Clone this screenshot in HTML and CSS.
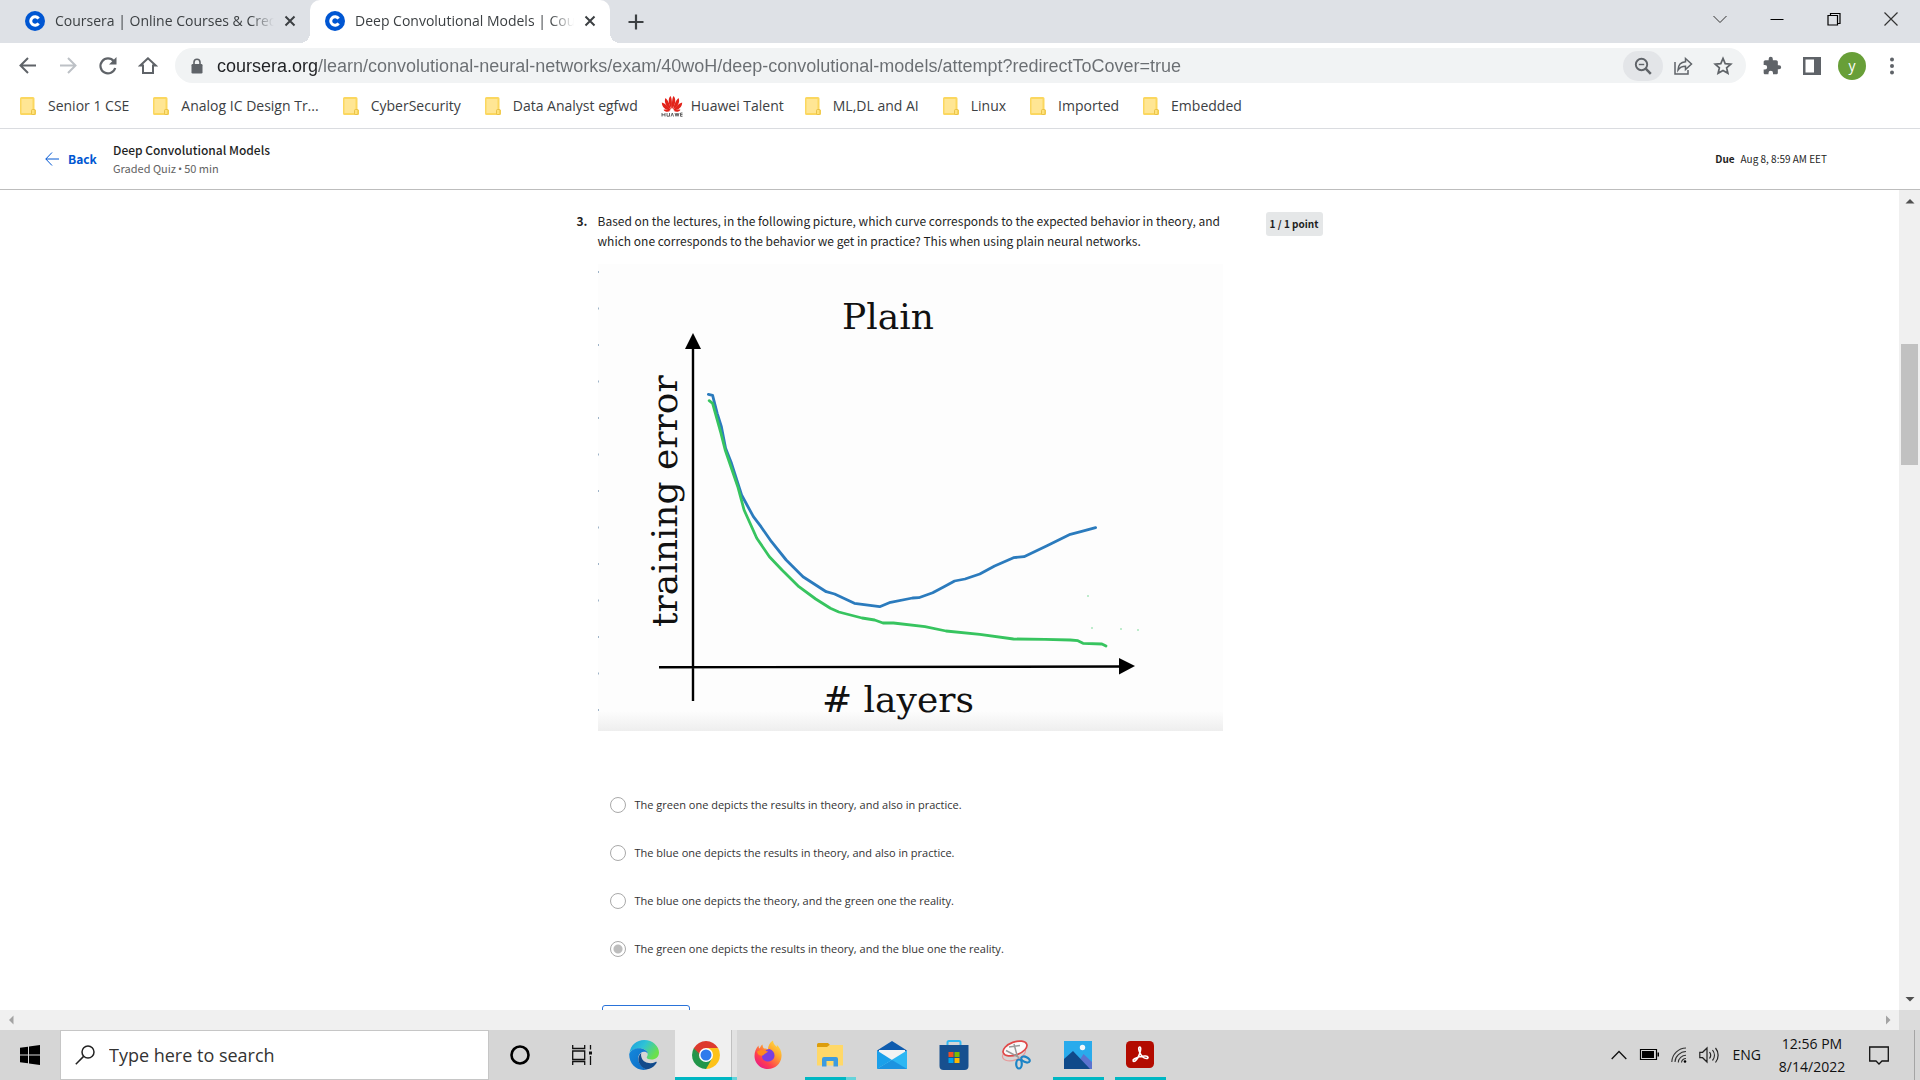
FILE: index.html
```html
<!DOCTYPE html>
<html lang="en">
<head>
<meta charset="utf-8">
<title>Deep Convolutional Models | Coursera</title>
<link rel="stylesheet" href="styles.css">
</head>
<body>
<svg class="defs" aria-hidden="true">
  <defs>
    <symbol id="coursera" viewBox="0 0 20 20"><circle cx="10" cy="10" r="10" fill="#0056d2"/><path d="M13.6 7.6A4.3 4.3 0 1 0 13.6 12.4" fill="none" stroke="#fff" stroke-width="3"/></symbol>
    <symbol id="x" viewBox="0 0 12 12"><path d="M1.500 1.500l9 9M10.500 1.500l-9 9" stroke="#3c4043" stroke-width="2"/></symbol>
    <symbol id="folder" viewBox="0 0 16 18"><path d="M1.500 0h11.500a1.500 1.500 0 0 1 1.500 1.500V12l1.500 1v4a1 1 0 0 1-1 1H1.500A1.500 1.500 0 0 1 0 16.500v-15A1.500 1.500 0 0 1 1.500 0z" fill="#fbd75f"/><path d="M1.500 2h11v14h-11z" fill="#ffe694"/><rect x="11.500" y="12.500" width="3.500" height="5" rx="1" fill="#ffe27a" stroke="#e3b93b" stroke-width=".8"/></symbol>
  </defs>
</svg>

<header class="browser">
  <div class="tabstrip">
    <div class="tab">
      <svg class="i20"><use href="#coursera"/></svg>
      <span class="tab-title">Coursera | Online Courses &amp; Cred</span>
      <button class="bare" aria-label="Close tab"><svg class="i12"><use href="#x"/></svg></button>
    </div>
    <div class="tab tab-active">
      <svg class="i20"><use href="#coursera"/></svg>
      <span class="tab-title">Deep Convolutional Models | Cou</span>
      <button class="bare" aria-label="Close tab"><svg class="i12"><use href="#x"/></svg></button>
    </div>
    <button class="bare new-tab" aria-label="New tab"><svg class="i16" viewBox="0 0 16 16"><path d="M8 .5v15M.5 8h15" stroke="#3c4043" stroke-width="2.200"/></svg></button>
    <div class="win">
      <button class="bare" aria-label="Search tabs"><svg class="i14" viewBox="0 0 14 14"><path d="M.5 4l6.500 6.500L13.500 4" fill="none" stroke="#333"/></svg></button>
      <button class="bare" aria-label="Minimize"><svg class="i14" viewBox="0 0 14 14"><path d="M.5 7.500h13" stroke="#000"/></svg></button>
      <button class="bare" aria-label="Restore"><svg class="i14" viewBox="0 0 14 14"><path d="M1 3.500h9.500V13H1zM3.500 3.500v-2H13v10h-2.500" fill="none" stroke="#000" stroke-width="1.200"/></svg></button>
      <button class="bare" aria-label="Close"><svg class="i14" viewBox="0 0 14 14"><path d="M.5.5l13 13M13.500.5l-13 13" stroke="#333" stroke-width="1.200"/></svg></button>
    </div>
  </div>

  <div class="toolbar">
    <div class="nav">
      <button class="bare" aria-label="Back"><svg class="i20" viewBox="0 0 20 20" fill="none" stroke="#5f6368" stroke-width="2"><path d="M18 9.500H3M10 2L2.500 9.500 10 17"/></svg></button>
      <button class="bare" aria-label="Forward"><svg class="i20" viewBox="0 0 20 20" fill="none" stroke="#bdc1c6" stroke-width="2"><path d="M2 9.500h15M10 2l7.500 7.500L10 17"/></svg></button>
      <button class="bare" aria-label="Reload"><svg class="i20" viewBox="0 0 20 20"><path d="M15.800 5.200A7.500 7.500 0 1 0 17.200 12" fill="none" stroke="#5f6368" stroke-width="2.200"/><path d="M18.500 1v7.500H11z" fill="#5f6368"/></svg></button>
      <button class="bare" aria-label="Home"><svg class="i20" viewBox="0 0 20 20"><path d="M10 2.300L2.300 9.500H5V17h10V9.500h2.700z" fill="none" stroke="#5f6368" stroke-width="2"/></svg></button>
    </div>
    <div class="omnibox">
      <svg class="i16" viewBox="0 0 16 16"><rect x="2.500" y="6" width="11" height="9.500" rx="1.200" fill="#5f6368"/><path d="M5 6.500V4.200a3 3 0 0 1 6 0v2.300" fill="none" stroke="#5f6368" stroke-width="1.600"/></svg>
      <input class="url" type="text" aria-label="Address" value="coursera.org/learn/convolutional-neural-networks/exam/40woH/deep-convolutional-models/attempt?redirectToCover=true">
      <button class="bare pill" aria-label="Zoom"><svg class="i18" viewBox="0 0 18 18" fill="none" stroke="#5f6368"><circle cx="7.500" cy="7.500" r="5.700" stroke-width="1.900"/><path d="M11.700 11.700l5.100 5.100" stroke-width="2.500"/><path d="M4.800 7.500h5.400" stroke-width="1.400"/></svg></button>
      <button class="bare pill-plain" aria-label="Share"><svg class="i20" viewBox="0 0 20 20" fill="none" stroke="#5f6368" stroke-width="1.500"><path d="M2 6v12h13v-4"/><path d="M12.500 2.500L18.500 8l-6 5.500V10.300C9 10.300 7 11 5 14c.2-5 3-8 7.500-8.300z"/></svg></button>
      <button class="bare pill-plain" aria-label="Bookmark"><svg class="i20" viewBox="0 0 20 20"><path d="M10 2.400l2.200 5.200 5.600.5-4.200 3.700 1.300 5.500L10 14.400l-4.900 2.900 1.300-5.500L2.200 8.100l5.600-.5z" fill="none" stroke="#5f6368" stroke-width="1.700"/></svg></button>
    </div>
    <div class="extras">
      <button class="bare" aria-label="Extensions"><svg class="i20" viewBox="0 0 24 24"><path d="M20.500 11H19V7c0-1.100-.9-2-2-2h-4V3.500a2.500 2.500 0 0 0-5 0V5H4c-1.100 0-2 .9-2 2v3.800h1.500a2.700 2.700 0 0 1 0 5.400H2V20c0 1.100.9 2 2 2h3.800v-1.500a2.700 2.700 0 0 1 5.400 0V22H17c1.100 0 2-.9 2-2v-4h1.500a2.500 2.500 0 0 0 0-5z" fill="#5f6368"/></svg></button>
      <button class="bare side-panel" aria-label="Side panel"><svg class="i20" viewBox="0 0 20 20"><path d="M1 1h18v18H1zM3.500 3.500v13H12v-13z" fill="#5f6368" fill-rule="evenodd"/></svg></button>
      <button class="bare avatar" aria-label="Profile">y</button>
      <button class="bare" aria-label="Menu"><svg class="i20" viewBox="0 0 20 20" fill="#5f6368"><circle cx="10" cy="3.500" r="2"/><circle cx="10" cy="10" r="2"/><circle cx="10" cy="16.500" r="2"/></svg></button>
    </div>
  </div>

  <nav class="bookmarks" aria-label="Bookmarks">
    <a href="#"><svg class="fold"><use href="#folder"/></svg>Senior 1 CSE</a>
    <a href="#"><svg class="fold"><use href="#folder"/></svg>Analog IC Design Tr...</a>
    <a href="#"><svg class="fold"><use href="#folder"/></svg>CyberSecurity</a>
    <a href="#"><svg class="fold"><use href="#folder"/></svg>Data Analyst egfwd</a>
    <a class="huawei" href="#"><svg class="i22" viewBox="0 0 22 22"><g fill="#e2231a"><path d="M10.700 14C7 9 7 3 9.500 1c1.500 2 1.800 8 1.200 13zM11.300 14C15 9 15 3 12.500 1c-1.500 2-1.800 8-1.200 13z"/><path d="M10 14.500C5.500 12 2.500 7 4.500 3c2.500 2 4.500 7 5.500 11.500zM12 14.500c4.500-2.500 7.500-7.500 5.500-11.500-2.500 2-4.500 7-5.500 11.500z"/><path d="M9.600 15C5 15.500 1 12.500.8 7.500 4 8.500 7.500 11.500 9.600 15zM12.400 15c4.600.5 8.600-2.500 8.800-7.500-3.200 1-6.700 4-8.800 7.500z"/><path d="M9.500 15.700c-2.500 1.800-5.500 1.500-7-.9 2-.6 5-.3 7 .9zM12.500 15.700c2.500 1.800 5.500 1.500 7-.9-2-.6-5-.3-7 .9z"/></g><path d="M1 18v3.500M4 18v3.500M1 19.800h3M6 18v3.200h2.500V18M10 21.500l1.300-3.500 1.200 3.500M14 18l1 3.300L16 18l1 3.300 1-3.300M21.500 18h-2v3.300h2M21.500 19.600h-2" fill="none" stroke="#555" stroke-width=".9"/></svg>Huawei Talent</a>
    <a href="#"><svg class="fold"><use href="#folder"/></svg>ML,DL and AI</a>
    <a href="#"><svg class="fold"><use href="#folder"/></svg>Linux</a>
    <a href="#"><svg class="fold"><use href="#folder"/></svg>Imported</a>
    <a href="#"><svg class="fold"><use href="#folder"/></svg>Embedded</a>
  </nav>
</header>

<div class="quiz-bar">
  <a class="back" href="#"><svg class="i14" viewBox="0 0 14 14" fill="none" stroke="#0056d2"><path d="M14 7H.8M7 .5L.8 7 7 13.500"/></svg>Back</a>
  <div class="quiz-name">
    <h1>Deep Convolutional Models</h1>
    <p>Graded Quiz<span class="dot">•</span>50 min</p>
  </div>
  <p class="due"><b>Due</b><span>Aug 8, 8:59 AM EET</span></p>
</div>

<div class="viewport">
  <main class="page">
    <form class="question">
      <b class="number">3.</b>
      <div class="body">
        <p>Based on the lectures, in the following picture, which curve corresponds to the expected behavior in theory, and which one corresponds to the behavior we get in practice? This when using plain neural networks.</p>
        <svg class="figure" viewBox="0 0 625 467" role="img" aria-label="Training error against number of layers for plain networks">
          <defs>
            <linearGradient id="shade" x1="0" y1="0" x2="0" y2="1"><stop offset="0" stop-color="#fdfdfd"/><stop offset="1" stop-color="#eeeeee"/></linearGradient>
          </defs>
          <rect width="625" height="467" fill="#fdfdfd"/>
          <rect y="447" width="625" height="20" fill="url(#shade)"/>
          <path d="M.5 7v446" stroke="#9fb4c8" stroke-dasharray="2 34.500"/>
          <g fill="none" stroke="#000" stroke-width="2.400"><path d="M95 84v353M61 403.300L522 402.500"/></g>
          <path d="M95 69l8 16H87zM537 402l-16 8.500v-16.500z"/>
          <g fill="none" stroke-linejoin="round" stroke-linecap="round" stroke-width="2.800">
            <polyline stroke="#2b7bbd" points="110.400,130.300 114.600,131.300 119.200,149.300 123.400,162.700 127.600,184.300 133.500,199.300 143.600,231 155.400,252.700 163,262.700 173.500,277.700 188.200,296 205,312.700 228.200,327.700 236.600,330 256.400,339.300 281.700,342.700 291.300,338.700 314.500,334 320.800,333.700 334.700,328.700 346,322.700 356.600,317 367,315 381.800,310 396.600,302 415.500,293.700 426,292.700 449,281.700 472.300,270.300 482.800,267.700 497.600,263.700"/>
            <polyline stroke="#37c45f" points="111.200,136.700 114.600,139.300 123,169.300 127.200,186 139.800,222.700 146.100,246 158.800,274.300 171.400,292.700 184,306 200.900,322.700 217.700,335 232.400,344.300 240.800,348 264,354 276.600,356 285,359 295.500,359 327,362.700 348,367 381.800,370.300 415.500,375 447,375.300 472.300,376 479.900,376.700 485,379.300 503.900,380 508,382"/>
          </g>
          <g fill="#a8e6bb"><circle cx="490" cy="332" r="1"/><circle cx="494" cy="364" r="1"/><circle cx="523" cy="365" r="1"/><circle cx="540" cy="366" r="1"/></g>
          <g class="fig-text">
            <text x="244" y="65">Plain</text>
            <text x="224" y="448"># layers</text>
            <text transform="translate(79 363) rotate(-90)">training error</text>
          </g>
        </svg>
        <fieldset class="options">
          <label><input type="radio" name="q3">The green one depicts the results in theory, and also in practice.</label>
          <label><input type="radio" name="q3">The blue one depicts the results in theory, and also in practice.</label>
          <label><input type="radio" name="q3">The blue one depicts the theory, and the green one the reality.</label>
          <label><input type="radio" name="q3" checked>The green one depicts the results in theory, and the blue one the reality.</label>
        </fieldset>
        <button class="more" type="button" aria-label="Show explanation"></button>
      </div>
      <span class="points">1 / 1 point</span>
    </form>
  </main>
  <div class="vbar">
    <svg class="i14" viewBox="0 0 14 14"><path d="M2.500 9.500h9L7 5z" fill="#505050"/></svg>
    <div class="thumb"></div>
    <svg class="i14" viewBox="0 0 14 14"><path d="M2.500 5h9L7 9.500z" fill="#505050"/></svg>
  </div>
  <div class="hbar">
    <svg class="i14" viewBox="0 0 14 14"><path d="M9.500 2.500v9L5 7z" fill="#a3a3a3"/></svg>
    <svg class="i14" viewBox="0 0 14 14"><path d="M5 2.500v9L9.500 7z" fill="#a3a3a3"/></svg>
  </div>
  <div class="corner"></div>
</div>

<footer class="taskbar">
  <button class="bare start" aria-label="Start"><svg class="i20" viewBox="0 0 20 20"><path d="M0 2.800L8 1.700v7.800H0zM9 1.500L20 0v9.500H9zM0 10.500h8v7.800L0 17.200zM9 10.500h11V20L9 18.500z"/></svg></button>
  <label class="search">
    <svg class="i20" viewBox="0 0 20 20" fill="none" stroke="#222" stroke-width="1.500"><circle cx="13" cy="7" r="6"/><path d="M8.600 11.400L.8 19.200"/></svg>
    <input type="text" placeholder="Type here to search" aria-label="Type here to search">
  </label>
  <div class="apps">
    <button class="bare" aria-label="Cortana"><svg class="i20" viewBox="0 0 20 20"><circle cx="10" cy="10" r="8.500" fill="none" stroke="#000" stroke-width="2.600"/></svg></button>
    <button class="bare" aria-label="Task view"><svg class="i20" viewBox="0 0 20 20" fill="none" stroke="#111" stroke-width="1.300"><path d="M.7 0v3.500h12V0M.7 6h12v8.500H.7zM.7 20v-3.500h12V20M18.500 0v4.500M18.500 11v9"/><path d="M17 6.500h3v3h-3z" fill="#111" stroke="none"/></svg></button>
    <button class="bare" aria-label="Edge"><svg class="i30" viewBox="0 0 30 30">
      <defs><linearGradient id="e1" x1="0" y1="0" x2="1" y2=".5"><stop offset="0" stop-color="#1a9be0"/><stop offset=".5" stop-color="#2fc3d6"/><stop offset="1" stop-color="#6be04b"/></linearGradient><linearGradient id="e2" x1="0" y1="0" x2="1" y2="1"><stop offset="0" stop-color="#1488dc"/><stop offset="1" stop-color="#0f6cc4"/></linearGradient></defs>
      <path d="M.5 13C1.500 5 8 0 15 0c9 0 15 6.500 15 12.500 0 4.500-3.500 7-7.500 7-3 0-4.800-1-4.800-2 0-.8 1-1.200 1-3.500 0-3-3-5.500-7.700-5.500C6 8.500 2 10 .5 13z" fill="url(#e1)"/>
      <path d="M.2 14C1.500 10.500 5 8.200 10 8.200c5 0 8.500 2.600 8.700 5.300-1-1.500-2.300-2-4-1.800-4 .5-6 4.300-5.300 8.300.8 4.500 4 8 9 9.300C9 32 0 25 .2 14z" fill="url(#e2)"/>
      <path d="M12.300 13c-3.300 2.500-3.800 7.500-1.300 11.500 2.500 4 6.500 5.500 9.500 4.300 3-1.200 5.500-3.300 7-5.800.6-1-.2-1.400-1-1-5 2.500-12 1-13.800-4-.8-2-.8-3.800-.4-5z" fill="#114a8b"/></svg></button>
    <button class="bare chrome" aria-label="Chrome"><svg class="i28" viewBox="0 0 28 28"><path d="M14 14L1.900 7A14 14 0 0 1 26.100 7z" fill="#dd3a2e"/><path d="M14 14L26.100 7A14 14 0 0 1 14 28z" fill="#fdc21a"/><path d="M14 14L14 28A14 14 0 0 1 1.900 7z" fill="#22964a"/><path d="M14 7h12.100L20 17.500z" fill="#fdc21a"/><path d="M20 17.500L14 28 8 17.500z" fill="#22964a"/><path d="M8 17.500L1.900 7 14 7z" fill="#22964a"/><path d="M1.900 7h24.200H14L8 17.500z" fill="#dd3a2e"/><path d="M1.900 7L8 17.500 14 20z" fill="#22964a"/><circle cx="14" cy="14" r="7" fill="#fff"/><circle cx="14" cy="14" r="5.500" fill="#2f7bec"/></svg></button>
    <button class="bare" aria-label="Firefox"><svg class="i30" viewBox="0 0 30 30">
      <defs><linearGradient id="f1" x1="1" y1="0" x2=".2" y2="1"><stop offset="0" stop-color="#fff04a"/><stop offset=".4" stop-color="#ffa52e"/><stop offset=".75" stop-color="#ff3d50"/><stop offset="1" stop-color="#e6178d"/></linearGradient></defs>
      <path d="M15 29C7 29 1.500 23 1.500 16c0-4 1.500-8 4-10.500 0 1.500.5 2.500 1 3 1-1.500 1.500-3 3-4 0 1.500.5 3 1.500 4 2 0 3 .3 4 1C15 6 16.500 2.500 20 .500c0 2.500 1.500 4.500 4 6.500 0-.8 0-1.500-.5-2.500 3.500 3 5.500 7.500 5 12C28 24 22 29 15 29z" fill="url(#f1)"/>
      <path d="M15 21.500c-4 0-6-2.500-6-5.500 0-2 1-3.500 2.500-4 1.500-2 3-3 5-3 3 1 5 3.500 5 6.500 0 3.500-3 6-6.500 6z" fill="#7a3ee0"/><path d="M4 11.500c2.500-1.500 5-2 7-1 1 .6 2.500.7 4 .8-.5 1.500-3 2-4 3.200-.6.800-1.500 1.500-3 1-2 0-3.500-1.500-4-4z" fill="#ff8a1f"/></svg></button>
    <button class="bare open more-open" aria-label="File Explorer"><svg class="i28" viewBox="0 0 28 28"><path d="M1 3.500A1.500 1.500 0 0 1 2.500 2h9.500l2 2v3H1z" fill="#dc9d0c"/><path d="M1 6h10l2.500-2H27v20.500H1z" fill="#ffd868"/><path d="M6 25.500V18a2 2 0 0 1 2-2h12a2 2 0 0 1 2 2v7.500h-4.500V20h-7v5.500z" fill="#3d9be0"/></svg></button>
    <button class="bare" aria-label="Mail"><svg class="i30" viewBox="0 0 30 30"><path d="M0 10.500L15 1l15 9.500-3 2H3z" fill="#0f5cae"/><path d="M2 10h26v13H2z" fill="#f3f3f3"/><path d="M0 10.500L15 20 0 29z" fill="#1ba0ea"/><path d="M30 10.500V29H0z" fill="#2db7f3"/><path d="M0 29h30L15 20z" fill="#1c93e0"/></svg></button>
    <button class="bare" aria-label="Store"><svg class="i30" viewBox="0 0 30 30"><path d="M8.500 7V2.500A1.500 1.500 0 0 1 10 1h10a1.500 1.500 0 0 1 1.500 1.500V7" fill="none" stroke="#32b8f2" stroke-width="2"/><path d="M.5 5h29v21a4 4 0 0 1-4 4h-21a4 4 0 0 1-4-4z" fill="#17508f"/><path d="M9.500 12h5v5h-5z" fill="#f25022"/><path d="M15.500 12h5v5h-5z" fill="#7fba00"/><path d="M9.500 18h5v5h-5z" fill="#00a4ef"/><path d="M15.500 18h5v5h-5z" fill="#ffb900"/></svg></button>
    <button class="bare" aria-label="Snipping Tool"><svg class="i30" viewBox="0 0 30 30" fill="none"><ellipse cx="13" cy="13.500" rx="12" ry="6.500" transform="rotate(-20 13 13.500)" stroke="#e79a9a" stroke-width="1.200"/><ellipse cx="14" cy="8.500" rx="12.500" ry="6.500" transform="rotate(-20 14 8.500)" fill="#fafafa" stroke="#e04848" stroke-width="1.700"/><path d="M13 4l3.500 13M5 10.500l13 7M8 7l11-1.500" stroke="#999" stroke-width="1.500"/><ellipse cx="18" cy="24" rx="2.800" ry="4.500" stroke="#1c84c6" stroke-width="2.200"/><ellipse cx="24.500" cy="19.500" rx="4.500" ry="2.600" transform="rotate(25 24.500 19.500)" stroke="#1c84c6" stroke-width="2.200"/></svg></button>
    <button class="bare open" aria-label="Photos"><svg class="i28" viewBox="0 0 28 28"><path d="M0 0h28v28H0z" fill="#29abec"/><path d="M10 28l9.500-15L28 21v7z" fill="#5b73cf"/><path d="M0 18l9-8 17 18H0z" fill="#104a8a"/><circle cx="18.500" cy="6.500" r="2.700" fill="#f3f8fb"/></svg></button>
    <button class="bare open" aria-label="Acrobat Reader"><svg class="i28" viewBox="0 0 28 28"><rect width="28" height="27" rx="4.500" fill="#b30b00"/><path d="M13.800 6c-1.600 0-1.300 3 .2 6 1.400 3 4 5.500 6.500 5.500 2.300 0 2-2.300-1-2.500-4-.2-8 1-11 2.800-2.600 1.600-1.200 3.700.8 2 2.200-1.900 4-5.500 4.900-9C14.900 8 14.900 6 13.800 6z" fill="none" stroke="#fff" stroke-width="1.600"/></svg></button>
  </div>
  <div class="tray">
    <svg class="i16" viewBox="0 0 16 16"><path d="M.7 12L8 4.500l7.300 7.500" fill="none" stroke="#111" stroke-width="1.300"/></svg>
    <svg class="i20" viewBox="0 0 20 20"><path d="M1.500 4.500h16v10h-16z" fill="none" stroke="#000" stroke-width="1.200"/><path d="M3 6h12v7H3zM18.500 7.500H20v4h-1.500z"/></svg>
    <svg class="i16" viewBox="0 0 16 16" fill="none" stroke="#333" stroke-width="1.100"><path d="M.8 15C1 7.500 7.500 1 15 1M4 15C4 9.500 9.500 4.500 15 4.500M7.300 15.500c0-4 3.700-7.300 7.700-7.300M10.500 15.500c0-2 2-4 4.500-4"/><circle cx="14" cy="14.500" r="1.300" fill="#000" stroke="none"/></svg>
    <svg class="i20" viewBox="0 0 20 20" fill="none" stroke="#222" stroke-width="1.200"><path d="M.8 7.300h2.800L8 3v14l-4.400-4.300H.8zM10.500 7c1.500 2 1.500 4.500 0 6.500M13.500 5c2.500 3.200 2.500 7.500 0 10.500M16.500 3c3.500 4.200 3.500 10 0 14.500"/></svg>
    <span class="lang">ENG</span>
    <time class="clock">12:56 PM<br>8/14/2022</time>
    <svg class="i20" viewBox="0 0 20 20"><path d="M.7 2h18.600v14H13l-3 3-3-3H.7z" fill="none" stroke="#111" stroke-width="1.300"/></svg>
    <span class="desk"></span>
  </div>
</footer>
</body>
</html>
```
FILE: styles.css
```css
* { box-sizing: border-box; }

body {
  margin: 0;
  height: 100vh;
  display: flex;
  flex-direction: column;
  overflow: hidden;
  background: #fff;
  color: #1f1f1f;
  font-family: "Open Sans", sans-serif;
  font-size: 14px;
}

p, h1 { margin: 0; }
a { color: inherit; text-decoration: none; }
svg { display: block; flex: none; }
.defs { position: absolute; width: 0; height: 0; }

.i12 { width: 12px; height: 12px; }
.i14 { width: 14px; height: 14px; }
.i16 { width: 16px; height: 16px; }
.i18 { width: 18px; height: 18px; }
.i20 { width: 20px; height: 20px; }
.i22 { width: 22px; height: 22px; }
.i28 { width: 28px; height: 28px; }
.i30 { width: 30px; height: 30px; }

.bare {
  display: flex;
  align-items: center;
  justify-content: center;
  padding: 0;
  border: 0;
  background: none;
  font: inherit;
}

/* tabs */
.tabstrip {
  display: flex;
  align-items: stretch;
  height: 43px;
  padding-left: 10px;
  background: #dee1e6;
}
.tab {
  display: flex;
  align-items: center;
  gap: 10px;
  width: 300px;
  padding: 0 14px 2px 15px;
}
.tab-active {
  position: relative;
  background: #fff;
  border-radius: 10px 10px 0 0;
}
.tab-active::before,
.tab-active::after {
  content: "";
  position: absolute;
  bottom: 0;
  width: 10px;
  height: 10px;
}
.tab-active::before { right: 100%; background: radial-gradient(circle at 0 0, transparent 10px, #fff 10px); }
.tab-active::after { left: 100%; background: radial-gradient(circle at 100% 0, transparent 10px, #fff 10px); }
.tab-title {
  flex: 1;
  overflow: hidden;
  white-space: nowrap;
  line-height: 20px;
  color: #3c4043;
  -webkit-mask-image: linear-gradient(to left, transparent, #000 24px);
  mask-image: linear-gradient(to left, transparent, #000 24px);
}
.new-tab { width: 52px; }
.win {
  display: flex;
  gap: 43px;
  margin-left: auto;
  padding: 0 22px 6px 0;
}

/* address bar */
.toolbar {
  display: flex;
  align-items: center;
  height: 45px;
  padding: 0 18px;
}
.nav { display: flex; gap: 20px; width: 157px; }
.omnibox {
  flex: 1;
  display: flex;
  align-items: center;
  height: 35px;
  padding: 0 3px 0 14px;
  border-radius: 18px;
  background: #f1f3f4;
}
.url {
  flex: 1;
  min-width: 0;
  margin-left: 12px;
  padding: 0;
  border: 0;
  outline: 0;
  font: 18px/24px "Liberation Sans", sans-serif;
  color: transparent;
  background: linear-gradient(to right, #202124 101px, #6a6e72 101px);
  -webkit-background-clip: text;
  background-clip: text;
}
.pill, .pill-plain { width: 40px; height: 30px; border-radius: 15px; }
.pill { background: #e3e5e8; }
.extras { display: flex; align-items: center; gap: 16px; padding-left: 16px; }
.side-panel { margin-left: 4px; }
.avatar {
  width: 28px;
  height: 28px;
  border-radius: 50%;
  background: #689f38;
  color: #fff;
  line-height: 20px;
}

/* bookmarks */
.bookmarks {
  display: flex;
  align-items: center;
  gap: 24px;
  height: 41px;
  padding: 0 20px 4px;
  border-bottom: 1px solid #dadce0;
  color: #3c4043;
}
.bookmarks a { display: flex; align-items: center; gap: 12px; line-height: 20px; white-space: nowrap; }
.bookmarks .huawei { gap: 8px; margin: 0 -3px 0 -1px; }
.fold { width: 16px; height: 18px; }

/* quiz header */
.quiz-bar {
  display: flex;
  align-items: center;
  height: 61px;
  padding: 0 93px 0 45px;
  border-bottom: 1px solid #bdbdbd;
  font-family: "Noto Sans CJK SC", sans-serif;
  font-size: 10px;
}
.back {
  display: flex;
  align-items: center;
  gap: 9px;
  width: 68px;
  color: #0056d2;
  font-size: 12px;
  font-weight: 700;
  line-height: 18px;
}
.quiz-name { color: #636363; font-size: 11px; line-height: 18px; }
.quiz-name h1 { font-size: 12px; font-weight: 500; line-height: 18px; color: #1f1f1f; }
.dot { padding: 0 2px; font-family: "Open Sans", sans-serif; }
.due { display: flex; gap: 6px; margin-left: auto; line-height: 18px; }

/* scrolling page */
.viewport {
  flex: 1;
  min-height: 0;
  display: grid;
  grid-template-columns: minmax(0, 1fr) 21px;
  grid-template-rows: minmax(0, 1fr) 20px;
}
.page { overflow: hidden; padding-top: 21px; }
.question {
  display: flex;
  align-items: flex-start;
  max-width: 746px;
  margin: 0 auto;
  font: 12px/20px "Noto Sans CJK SC", sans-serif;
}
.number { width: 21px; flex: none; }
.body { flex: 1; max-width: 625px; min-width: 0; }
.figure { width: 100%; height: auto; margin-top: 13px; }
.fig-text { font-family: "DejaVu Serif", serif; font-size: 36px; fill: #111; }
.points {
  flex: none;
  width: 57px;
  margin: 1px 0 0 auto;
  border-radius: 3px;
  background: #e5e7e8;
  font-size: 10px;
  font-weight: 700;
  line-height: 24px;
  text-align: center;
}
.options { margin: 50px 0 32px; padding: 0 12px; border: 0; }
.options label {
  display: flex;
  align-items: center;
  gap: 9px;
  height: 48px;
  font-family: "Open Sans", sans-serif;
  font-size: 11px;
  color: #333;
}
.options input {
  appearance: none;
  flex: none;
  width: 16px;
  height: 16px;
  margin: 0;
  border: 1px solid #a9a9a9;
  border-radius: 50%;
  background: #fff;
}
.options input:checked { background: radial-gradient(circle, #bdbdbd 4px, #fff 5px); }
.more {
  display: block;
  width: 88px;
  height: 36px;
  margin-left: 4px;
  border: 1px solid #2a73d9;
  border-radius: 3px;
  background: #fff;
}

.vbar, .hbar { display: flex; align-items: center; justify-content: space-between; background: #f0f0f0; }
.vbar { flex-direction: column; padding: 4px 0; }
.thumb { width: 17px; height: 121px; margin: 136px 0 auto; background: #c1c1c1; }
.hbar { padding: 0 4px; }
.corner { background: #dcdcdc; }

/* taskbar */
.taskbar { display: flex; height: 50px; background: #d6d6d6; }
.start { width: 60px; }
.search {
  display: flex;
  align-items: center;
  gap: 14px;
  width: 429px;
  padding: 0 14px;
  border: 1px solid #c6c6c6;
  background: #fff;
}
.search input {
  flex: 1;
  min-width: 0;
  padding: 0;
  border: 0;
  outline: 0;
  font: 18px/24px "Open Sans", sans-serif;
}
.search input::placeholder { color: #333; }
.apps { display: flex; }
.apps .bare { width: 62px; }
.apps .chrome {
  padding-right: 1px;
  background:
    linear-gradient(to right, #00b7c3 57px, #66d3da 57px) bottom / 100% 3px no-repeat,
    linear-gradient(to right, #f0f0f0 56px, #c0c0c0 56px 57px, #e2e2e2 57px);
}
.apps .open { background: linear-gradient(#00b7c3, #00b7c3) 6px 100% / 51px 3px no-repeat; }
.apps .more-open { background-image: linear-gradient(to right, #00b7c3 41px, #66d3da 41px); }
.tray { display: flex; align-items: center; gap: 12px; margin-left: auto; color: #111; }
.lang { margin-left: 2px; line-height: 20px; }
.clock { width: 70px; margin: 0 10px 0 4px; line-height: 23px; text-align: center; }
.desk { width: 6px; height: 50px; margin-left: 13px; border-left: 1px solid #a5a5a5; }
```
